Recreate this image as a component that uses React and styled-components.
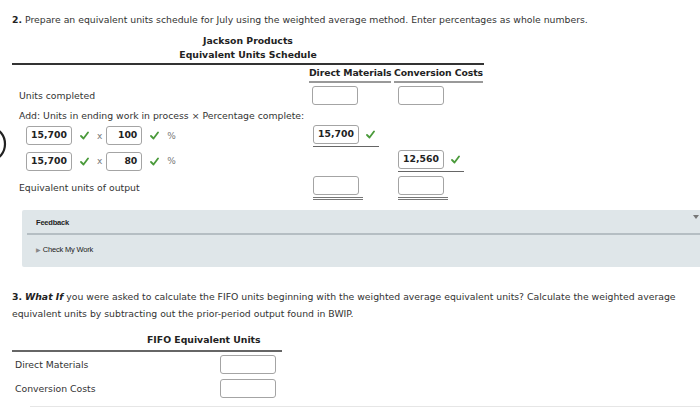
import React from 'react';
import styled, { createGlobalStyle } from 'styled-components';

const Global = createGlobalStyle`
  html, body { margin: 0; padding: 0; background: #fff; }
  body {
    font-family: 'DejaVu Sans', Verdana, sans-serif;
    font-size: 9.3px;
    color: #333;
    width: 700px;
    height: 408px;
    overflow: hidden;
  }
`;

const Page = styled.div`
  position: relative;
  padding-top: 14px;
`;

const Prompt = styled.p`
  margin: 0 0 0 12px;
  line-height: 12px;
  b { color: #222; }
`;

const Edge = styled.svg`
  position: absolute;
  left: 0;
  top: 127px;
`;

const Schedule = styled.div`
  width: 472px;
  margin: 8px 0 0 12px;
`;

const Title = styled.div`
  font-weight: bold;
  text-align: center;
  line-height: 14px;
  color: #222;
`;

const HeavyRule = styled.div`
  height: 2px;
  background: #333;
  margin-top: 1px;
`;

const Row = styled.div`
  display: flex;
  align-items: center;
  height: ${p => p.h}px;
`;

const Label = styled.div`
  width: 297px;
  flex-shrink: 0;
  display: flex;
  align-items: center;
  padding-left: ${p => p.indent ?? 7}px;
  box-sizing: border-box;
`;

const Col = styled.div`
  width: ${p => p.w}px;
  flex-shrink: 0;
  margin-left: ${p => p.gap ?? 0}px;
  padding-left: ${p => p.pad ?? 0}px;
  box-sizing: border-box;
  display: flex;
  align-items: center;
`;

const Head = styled.div`
  width: ${p => p.w}px;
  flex-shrink: 0;
  margin-left: ${p => p.gap ?? 0}px;
  font-weight: bold;
  color: #222;
  text-align: center;
  line-height: 13px;
  padding-bottom: 2px;
  border-bottom: 2px solid #999;
  white-space: nowrap;
  letter-spacing: -0.1px;
`;

const Cell = styled.div`
  display: flex;
  align-items: center;
  flex-shrink: 0;
  padding-bottom: 2px;
  border-bottom: 1px solid #666;
  width: ${p => p.under}px;
`;

const Double = styled.div`
  padding-bottom: 2px;
  border-bottom: 3px double #777;
  width: 50px;
`;

const Box = styled.div`
  width: ${p => p.w ?? 46}px;
  height: ${p => p.hh ?? 19}px;
  flex-shrink: 0;
  box-sizing: border-box;
  border: 1.5px solid #a4a4a4;
  border-radius: 3px;
  background: #fff;
  font-weight: bold;
  color: #222;
  text-align: right;
  padding-right: 4px;
  line-height: 16px;
`;

const Mark = styled.span`
  margin: 0 ${p => p.r ?? 8}px 0 ${p => p.l ?? 8}px;
  color: #777;
  font-size: 9px;
`;

const Tick = ({ l = 8, r = 8 }) => (
  <svg width="9" height="9" viewBox="0 0 9 9" style={{ marginLeft: l, marginRight: r, flexShrink: 0 }}>
    <polyline points="1,5 3.5,7.5 8,1.5" fill="none" stroke="#4a9a3a" strokeWidth="1.8" strokeLinecap="round" strokeLinejoin="round" />
  </svg>
);

const Feedback = styled.div`
  margin: 9px 0 0 22px;
  height: 57px;
  background: #dfe6e9;
  border-radius: 2px 0 0 2px;
  font-family: 'Liberation Sans', Arial, sans-serif;
  font-size: 7.5px;
  color: #222;
  position: relative;
`;

const FbHead = styled.div`
  padding: 8px 0 0 14px;
  height: 15px;
  font-weight: bold;
  letter-spacing: -0.2px;
`;

const FbRule = styled.div`
  margin-left: 5px;
  height: 2px;
  background: #b5bec3;
`;

const FbLink = styled.div`
  padding: 10px 0 0 14px;
  letter-spacing: -0.2px;
  span { color: #888; font-size: 6px; margin-right: 2px; }
`;

const Caret = styled.div`
  position: absolute;
  right: 1px;
  top: 5px;
  width: 0;
  height: 0;
  border-left: 3px solid transparent;
  border-right: 3px solid transparent;
  border-top: 4px solid #777;
`;

const Question = styled.p`
  margin: 21px 0 0 12px;
  line-height: 17px;
  width: 680px;
  b { color: #222; }
`;

const Fifo = styled.div`
  width: 270px;
  margin: 11px 0 0 12px;
`;

const FifoHead = styled.div`
  padding-left: 135px;
  font-weight: bold;
  color: #222;
  line-height: 14px;
  padding-bottom: 3px;
  border-bottom: 2px solid #666;
`;

const FifoRow = styled.div`
  display: flex;
  align-items: center;
  justify-content: space-between;
  height: 24px;
  padding: 0 6px 0 3px;
`;

const Faint = styled.div`
  margin: 6px 0 0 30px;
  height: 1px;
  background: #e6e6e6;
`;

const Factor = ({ units, pct }) => (
  <Label indent={14}>
    <Box>{units}</Box>
    <Tick />
    <Mark l={0} r={4}>x</Mark>
    <Box w={36}>{pct}</Box>
    <Tick />
    <Mark l={0}>%</Mark>
  </Label>
);

export default function App() {
  return (
    <Page>
      <Global />
      <Edge width="8" height="34" viewBox="0 0 8 34">
        <path d="M -8 1.5 A 13 15.5 0 0 1 -8 32.5" fill="none" stroke="#222" strokeWidth="2.2" />
      </Edge>
      <Prompt>
        <b>2.</b> Prepare an equivalent units schedule for July using the weighted average method. Enter percentages as whole numbers.
      </Prompt>
      <Schedule>
        <Title>Jackson Products</Title>
        <Title>Equivalent Units Schedule</Title>
        <HeavyRule />
        <Row h={19}>
          <Label />
          <Head w={82}>Direct Materials</Head>
          <Head w={89} gap={3}>Conversion Costs</Head>
        </Row>
        <Row h={23}>
          <Label>Units completed</Label>
          <Col w={82} pad={3}><Box /></Col>
          <Col w={89} gap={3} pad={4}><Box /></Col>
        </Row>
        <Row h={16}>
          <Label>Add: Units in ending work in process × Percentage complete:</Label>
        </Row>
        <Row h={25}>
          <Factor units="15,700" pct="100" />
          <Col w={82} pad={4}>
            <Cell under={66}>
              <Box>15,700</Box>
              <Tick l={7} r={0} />
            </Cell>
          </Col>
        </Row>
        <Row h={26}>
          <Factor units="15,700" pct="80" />
          <Col w={82} />
          <Col w={89} gap={3} pad={4}>
            <Cell under={66}>
              <Box>12,560</Box>
              <Tick l={7} r={0} />
            </Cell>
          </Col>
        </Row>
        <Row h={27}>
          <Label>Equivalent units of output</Label>
          <Col w={82} pad={4}><Double><Box /></Double></Col>
          <Col w={89} gap={3} pad={4}><Double><Box /></Double></Col>
        </Row>
      </Schedule>
      <Feedback>
        <FbHead>Feedback</FbHead>
        <FbRule />
        <FbLink><span>▶</span>Check My Work</FbLink>
        <Caret />
      </Feedback>
      <Question>
        <b>3.</b> <b><i>What If</i></b> you were asked to calculate the FIFO units beginning with the weighted average equivalent units? Calculate the weighted average equivalent units by subtracting out the prior-period output found in BWIP.
      </Question>
      <Fifo>
        <FifoHead>FIFO Equivalent Units</FifoHead>
        <FifoRow>
          <span>Direct Materials</span>
          <Box w={56} />
        </FifoRow>
        <FifoRow>
          <span>Conversion Costs</span>
          <Box w={56} />
        </FifoRow>
      </Fifo>
      <Faint />
    </Page>
  );
}
